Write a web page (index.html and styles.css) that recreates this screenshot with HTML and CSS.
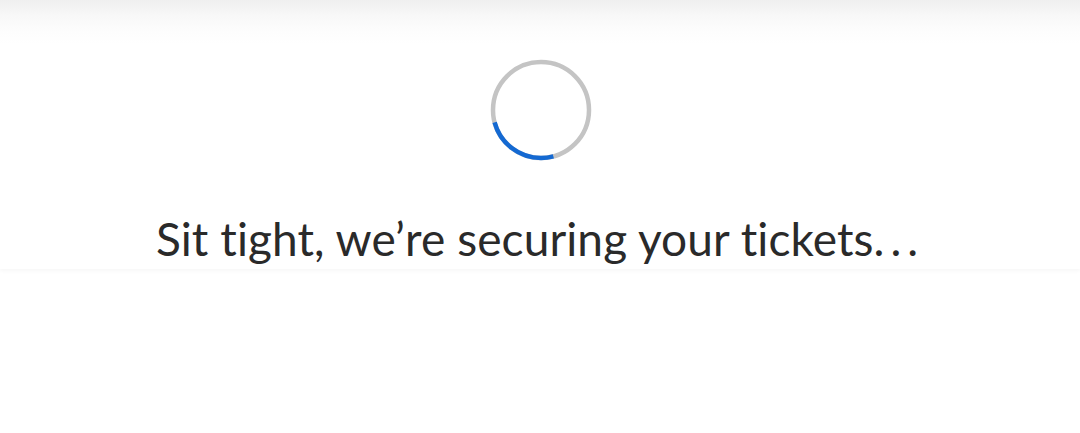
FILE: index.html
```html
<!DOCTYPE html>
<html lang="en">
<head>
<meta charset="utf-8">
<title>Securing your tickets</title>
<link rel="stylesheet" href="styles.css">
</head>
<body>
  <main class="panel">
    <div class="spinner" role="progressbar" aria-label="Loading">
      <svg viewBox="0 0 104 104" width="104" height="104">
        <circle class="track" cx="52" cy="52" r="48"/>
        <circle class="arc" cx="52" cy="52" r="48" pathLength="360" stroke-dasharray="90 270" stroke-dashoffset="-75"/>
      </svg>
    </div>
    <p class="message">Sit tight, we’re securing your tickets<span class="dots">...</span></p>
  </main>
</body>
</html>
```

FILE: styles.css
```css
html, body {
  margin: 0;
  padding: 0;
  background: #ffffff;
}

body {
  width: 1080px;
  height: 433px;
  overflow: hidden;
  font-family: "Lato", "Open Sans", sans-serif;
}

.panel {
  height: 269px;
  display: flex;
  flex-direction: column;
  align-items: center;
  box-sizing: border-box;
  padding-top: 58px;
  background: linear-gradient(#efefef 0, #f8f8f8 16px, #fdfdfd 32px, #ffffff 44px);
  box-shadow: 0 2px 4px rgba(0, 0, 0, 0.035);
}

.spinner {
  width: 104px;
  height: 104px;
  margin-left: 2px;
}

.spinner svg {
  display: block;
}

.track {
  fill: none;
  stroke: #c4c4c4;
  stroke-width: 4.5;
}

.arc {
  fill: none;
  stroke: #1469d2;
  stroke-width: 4.5;
}

.message {
  margin: 50px 0 0;
  font-size: 46px;
  font-weight: 400;
  line-height: 54px;
  color: #2a2a2a;
  letter-spacing: 0.1px;
}

.dots {
  letter-spacing: 6px;
}
```
